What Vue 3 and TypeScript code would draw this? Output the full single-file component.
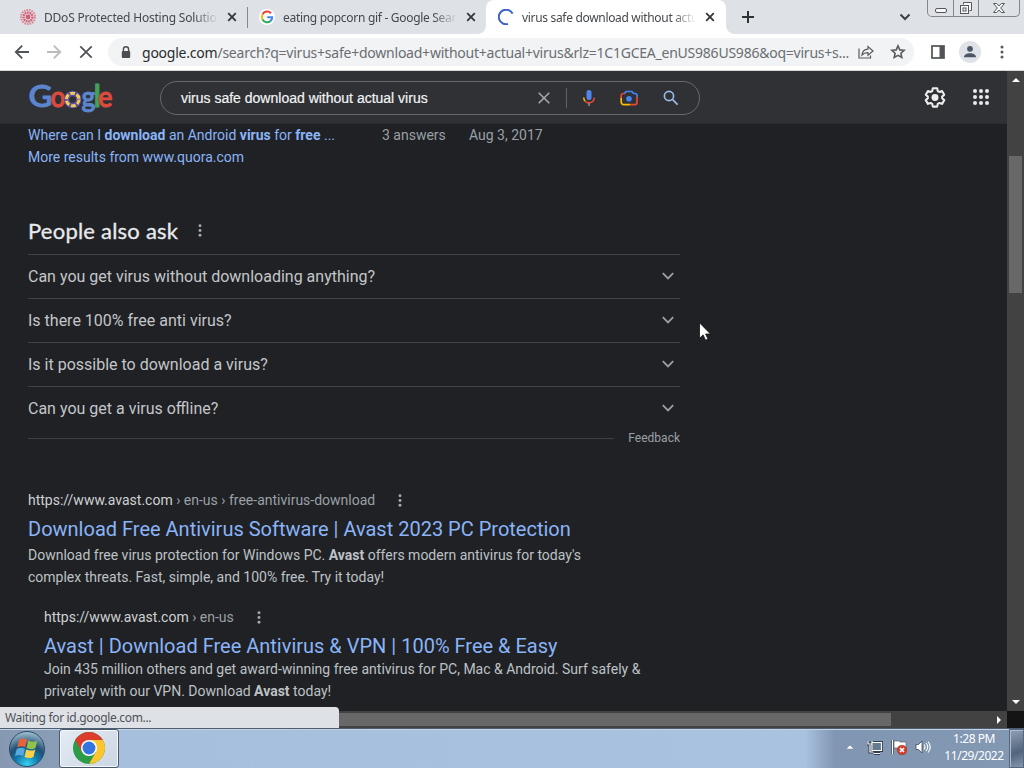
<template>
  <div class="desktop">
    <header class="tab-strip">
      <div v-for="tab in tabs" :key="tab.title" :class="['tab', tab.icon, { active: tab.active }]">
        <svg v-if="tab.icon === 'flower'" class="tab-icon" viewBox="0 0 16 16">
          <circle cx="8" cy="8" r="7" fill="none" stroke="#dc8291" stroke-width="2" stroke-dasharray="1.6 1" />
          <circle cx="8" cy="8" r="4.4" fill="none" stroke="#d2667a" stroke-width="2.4" stroke-dasharray="1.8 .6" />
          <circle cx="8" cy="8" r="2.4" fill="#cf5c71" />
        </svg>
        <svg v-else-if="tab.icon === 'google'" class="tab-icon" viewBox="0 0 16 16">
          <circle cx="8" cy="8" r="8" fill="#fff" />
          <g fill="none" stroke-width="2.1">
            <path d="M12 4.2A5.2 5.2 0 0 0 3.5 5.4" stroke="#ea4335" />
            <path d="M3.5 5.4a5.3 5.3 0 0 0 0 5.2" stroke="#fbbc05" />
            <path d="M3.5 10.6a5.2 5.2 0 0 0 7.9 1.5" stroke="#34a853" />
            <path d="M11.4 12.1A5 5 0 0 0 13.1 8.2H8.2" stroke="#4285f4" />
          </g>
        </svg>
        <svg v-else class="tab-icon" viewBox="0 0 16 16">
          <path d="M14.6 4.6A7.3 7.3 0 1 0 10 15" fill="none" stroke="#3c62c4" stroke-width="2" />
        </svg>
        <span class="tab-title">{{ tab.title }}</span>
        <svg class="tab-close" viewBox="0 0 10 10"><path d="M1.2 1.2l7.6 7.6M8.8 1.2L1.2 8.8" /></svg>
      </div>
      <svg class="new-tab" viewBox="0 0 12 12"><path d="M6 0v12M0 6h12" /></svg>
      <svg class="tab-search" viewBox="0 0 12 8"><path d="M1.5 1.5L6 6l4.5-4.5" /></svg>
      <div class="window-buttons">
        <span class="minimize"><svg viewBox="0 0 14 14"><rect x="1.5" y="7.5" width="11" height="4" rx="1.5" /></svg></span>
        <span class="restore">
          <svg viewBox="0 0 14 14">
            <path d="M4.5 3.5v-2h8v8h-2" /><rect x="1.5" y="4.5" width="8" height="8" /><rect x="4" y="7" width="3" height="3" />
          </svg>
        </span>
        <span class="shut">
          <svg viewBox="0 0 14 14">
            <path d="M1.5 2.5h3.2L7 5l2.3-2.5h3.2L8.7 7l3.8 4.5H9.3L7 9l-2.3 2.5H1.5L5.3 7z" />
          </svg>
        </span>
      </div>
    </header>

    <nav class="toolbar">
      <svg class="nav-icon" viewBox="0 0 16 16"><path d="M15 8H2M8.2 1.6L1.8 8l6.4 6.4" /></svg>
      <svg class="nav-icon disabled" viewBox="0 0 16 16"><path d="M1 8h13M7.8 1.6L14.2 8l-6.4 6.4" /></svg>
      <svg class="nav-icon" viewBox="0 0 16 16"><path d="M2.3 2.3l11.4 11.4M13.7 2.3L2.3 13.7" /></svg>
      <div class="omnibox">
        <svg class="lock" viewBox="0 0 10 13">
          <path d="M2.4 6V3.4a2.6 2.6 0 0 1 5.2 0V6" fill="none" stroke="#4a4d51" stroke-width="1.4" />
          <rect x=".8" y="5" width="8.4" height="7" rx="1" fill="#4a4d51" />
        </svg>
        <span class="url"><b>google.com</b>/search?q=virus+safe+download+without+actual+virus&amp;rlz=1C1GCEA_enUS986US986&amp;oq=virus+s...</span>
        <svg class="share" viewBox="0 0 16 16">
          <path d="M1 4.5V14h11.5v-2.5M4 11c.3-4 2.5-5.7 6-5.9V2.5L15 7l-5 4.2V8.7C7 8.6 5.5 9.2 4 11z" />
        </svg>
        <svg class="star" viewBox="0 0 16 16">
          <path d="M8 1.9l1.8 4 4.3.4-3.2 2.9.9 4.300L8 11.300l-3.800 2.200.9-4.300-3.200-2.900 4.300-.4z" />
        </svg>
      </div>
      <svg class="side-panel" viewBox="0 0 14 14">
        <rect x="1" y="1" width="12" height="12" fill="none" stroke="#515457" stroke-width="1.7" /><path d="M8.5 1H13v12H8.5z" fill="#515457" />
      </svg>
      <svg class="avatar" viewBox="0 0 22 22">
        <circle cx="11" cy="11" r="11" fill="#dfe2e7" />
        <circle cx="11" cy="7.8" r="2.900" fill="#4d5666" />
        <path d="M5 16.2c0-5.4 12-5.4 12 0z" fill="#4d5666" />
      </svg>
      <svg class="menu" viewBox="0 0 4 14"><circle v-for="y in [2, 7, 12]" :key="y" cx="2" :cy="y" r="1.5" fill="#55585c" /></svg>
    </nav>

    <main class="viewport">
      <div class="page">
        <div class="search-header">
          <svg class="logo" viewBox="0 0 86 34">
            <g class="logo-text">
              <text x="0.5" y="25" class="blue capital" textLength="24" lengthAdjust="spacingAndGlyphs">G</text>
              <text x="22.500" y="25" class="red" textLength="15" lengthAdjust="spacingAndGlyphs">o</text>
              <text x="53.500" y="25" class="blue" textLength="14" lengthAdjust="spacingAndGlyphs">g</text>
              <text x="65.500" y="25" class="green tall">l</text>
              <text x="70" y="25" class="red" textLength="14.500" lengthAdjust="spacingAndGlyphs">e</text>
            </g>
            <circle cx="44.7" cy="17.500" r="6" fill="none" stroke="#5b4fa0" stroke-width="5.500" />
            <circle cx="44.7" cy="17.500" r="6.300" fill="none" stroke="#f1cc52" stroke-width="3" stroke-dasharray="4.800 1.800" />
          </svg>
          <div class="search-box">
            <span class="query">virus safe download without actual virus</span>
            <svg class="clear" viewBox="0 0 12 12"><path d="M.7.7l10.6 10.6M11.3.7L.7 11.3" /></svg>
            <i class="divider"></i>
            <svg class="mic" viewBox="0 0 14 18">
              <rect x="4.500" y="1" width="5" height="10" rx="2.500" fill="#4f86ec" />
              <path d="M1.7 8.5a5.4 5.4 0 0 0 1.5 3.7" stroke="#f6b90d" />
              <path d="M3.2 12.2A5.3 5.3 0 0 0 12.3 8.5" stroke="#e5483b" />
              <path d="M7 14v3" stroke="#a08d82" />
            </svg>
            <svg class="lens" viewBox="0 0 18 16">
              <path d="M1.2 8V5.5a2 2 0 0 1 2-2H5" stroke="#e5483b" />
              <path d="M4.5 3.5L6 1.5h6l1.5 2H15a2 2 0 0 1 2 2V7" stroke="#4285f4" />
              <path d="M1.2 8v4a2.6 2.6 0 0 0 2.6 2.6H10" stroke="#fbbc04" />
              <path d="M10 14.6h5a2 2 0 0 0 2-2V7" stroke="#e5483b" />
              <circle cx="9" cy="8.7" r="2.8" fill="#4285f4" />
            </svg>
            <svg class="magnifier" viewBox="0 0 16 16"><circle cx="6" cy="6" r="4.6" /><path d="M9.4 9.4l5.2 5.2" /></svg>
          </div>
          <svg class="gear" viewBox="0 0 24 24">
            <path d="M9.6 2.5h4.8l.6 3 1.8 1 2.900-1 2.400 4.100-2.300 2v1.800l2.300 2-2.400 4.100-2.900-1-1.800 1-.6 3H9.600l-.6-3-1.800-1-2.900 1-2.400-4.100 2.300-2v-1.800l-2.300-2 2.400-4.100 2.900 1 1.800-1z" />
            <circle cx="12" cy="12.500" r="3.800" />
          </svg>
          <svg class="apps" viewBox="0 0 16 16">
            <circle v-for="n in 9" :key="n" :cx="2 + ((n - 1) % 3) * 6" :cy="2 + Math.floor((n - 1) / 3) * 6" r="2" />
          </svg>
        </div>

        <div class="content">
          <div class="forum-row">
            <a>Where can I <b>download</b> an Android <b>virus</b> for <b>free</b> ...</a>
            <span class="answers">3 answers</span>
            <span>Aug 3, 2017</span>
          </div>
          <div class="forum-row"><a>More results from www.quora.com</a></div>

          <h2>
            <span>People also ask</span>
            <svg class="dots" viewBox="0 0 4 14"><circle v-for="y in [2, 7, 12]" :key="y" cx="2" :cy="y" r="1.6" /></svg>
          </h2>
          <div v-for="question in questions" :key="question" class="question">
            <span>{{ question }}</span>
            <svg viewBox="0 0 12 8"><path d="M.8 1.2L6 6.4l5.2-5.2" /></svg>
          </div>
          <div class="feedback"><i></i><span>Feedback</span></div>

          <article v-for="result in results" :key="result.title" :class="['result', { nested: result.nested }]">
            <div class="cite">
              <span>https://www.avast.com</span><em>{{ result.path }}</em>
              <svg class="dots" viewBox="0 0 4 14"><circle v-for="y in [2, 7, 12]" :key="y" cx="2" :cy="y" r="1.6" /></svg>
            </div>
            <h3>{{ result.title }}</h3>
            <p v-for="(line, i) in result.lines" :key="i">
              <template v-for="(part, j) in line" :key="j"><b v-if="part === 'Avast'">{{ part }}</b><template v-else>{{ part }}</template></template>
            </p>
          </article>
        </div>
      </div>
      <div class="v-scroll">
        <svg viewBox="0 0 8 4"><path d="M0 4l4-4 4 4z" /></svg>
        <div class="v-thumb"></div>
        <svg viewBox="0 0 8 4"><path d="M0 0l4 4 4-4z" /></svg>
      </div>
    </main>
    <div class="h-scroll">
      <div class="h-track">
        <div class="h-thumb"></div>
        <svg viewBox="0 0 4 8"><path d="M0 0l4 4-4 4z" /></svg>
      </div>
      <div class="status">Waiting for id.google.com...</div>
    </div>

    <footer class="taskbar">
      <svg class="start" viewBox="0 0 38 38">
        <defs>
          <radialGradient id="orb" cx=".5" cy=".95" r=".95">
            <stop offset="0" stop-color="#39d4f4" /><stop offset=".35" stop-color="#127bae" />
            <stop offset=".6" stop-color="#214f73" /><stop offset="1" stop-color="#a5c3d4" />
          </radialGradient>
        </defs>
        <circle cx="19" cy="19" r="17.5" fill="url(#orb)" stroke="#294a66" />
        <path d="M11 10c3-2 6-1.800 8-.2L17.200 17.300c-3-1.500-5.500-1.300-8 .2z" fill="#e8633a" />
        <path d="M20.200 10.500c3 1.600 6 1.600 9 .2L27.500 18c-3 1.700-6 1.500-9 .1z" fill="#91c34a" />
        <path d="M8.700 19c3-1.700 5.600-1.500 8.200-.3L15.200 26c-2.800-1.400-5.600-1.300-8.200.2z" fill="#55a9dd" />
        <path d="M18.200 19.500c3.300 1.500 6.200 1.400 9-.1L25.500 26.900c-3 1.600-6 1.600-9 .1z" fill="#fad047" />
      </svg>
      <div class="task-button">
        <svg viewBox="0 0 48 48">
          <circle cx="24" cy="24" r="24" fill="#2d9b48" />
          <path d="M3.220 12A24 24 0 0 1 44.780 12H24L13.600 30z" fill="#dc3c2c" />
          <path d="M44.780 12A24 24 0 0 1 24 48L34.400 30 24 12z" fill="#fcc62c" />
          <circle cx="24" cy="24" r="12" fill="#fff" />
          <circle cx="24" cy="24" r="9.700" fill="#3474e0" />
        </svg>
      </div>
      <div class="tray">
        <svg class="tray-arrow" viewBox="0 0 8 5"><path d="M0 5l4-4 4 4z" fill="#fff" stroke="#68788c" stroke-width=".5" /></svg>
        <svg class="network" viewBox="0 0 16 16">
          <g fill="none" stroke="#2f3c4b" stroke-width="3"><path d="M5 3.5h9.500v8H5zM7 14.500h6M3 6v7h3M1 2v3h4V2" /></g>
          <path d="M6 4h8v7H6z" fill="#667b92" />
          <g fill="none" stroke="#fff" stroke-width="1.2"><path d="M5 3.500h9.500v8H5zM7 14.500h6M3 6v7h3M1 2v3h4V2" /></g>
        </svg>
        <svg class="flag" viewBox="0 0 16 16">
          <path d="M1.5 1v14" stroke="#3b4654" stroke-width="3" /><path d="M1.5 1v14" stroke="#fff" stroke-width="1.3" />
          <path d="M3 2h5l1 1h6v7H9L8 9H3z" fill="#fff" stroke="#566474" stroke-width=".7" />
          <circle cx="11" cy="11" r="4.8" fill="#d63d2d" stroke="#8f261d" stroke-width=".5" />
          <path d="M9 9l4 4M13 9l-4 4" stroke="#fff" stroke-width="1.7" />
        </svg>
        <svg class="speaker" viewBox="0 0 16 16">
          <path d="M1 5.5h2.500L7 2v12l-3.500-3.500H1z" fill="#fff" stroke="#3c4a5a" stroke-width=".8" />
          <path d="M9 5.500q2 2.500 0 5M11 4q3.500 4 0 8M13 2.500q4.500 5.500 0 11" fill="none" stroke="#fff" stroke-width="1.1" />
        </svg>
      </div>
      <div class="clock"><span>1:28 PM</span><span>11/29/2022</span></div>
      <div class="show-desktop"></div>
    </footer>

    <svg class="cursor" viewBox="0 0 12 19">
      <path d="M.5.8v15.5l3.600-3.400 2.400 5.300 2.500-1.100-2.400-5.100h4.900z" fill="#fff" stroke="#111" stroke-width=".8" />
    </svg>
  </div>
</template>

<script setup lang="ts">
interface Tab {
  title: string
  icon: string
  active?: boolean
}

interface Result {
  path: string
  title: string
  lines: string[][]
  nested?: boolean
}

const tabs: Tab[] = [
  { title: 'DDoS Protected Hosting Solutions', icon: 'flower' },
  { title: 'eating popcorn gif - Google Search', icon: 'google' },
  { title: 'virus safe download without actual', icon: 'loading', active: true }
]

const questions: string[] = [
  'Can you get virus without downloading anything?',
  'Is there 100% free anti virus?',
  'Is it possible to download a virus?',
  'Can you get a virus offline?'
]

const results: Result[] = [
  {
    path: ' › en-us › free-antivirus-download',
    title: 'Download Free Antivirus Software | Avast 2023 PC Protection',
    lines: [
      ['Download free virus protection for Windows PC. ', 'Avast', " offers modern antivirus for today's"],
      ['complex threats. Fast, simple, and 100% free. Try it today!']
    ]
  },
  {
    path: ' › en-us',
    title: 'Avast | Download Free Antivirus & VPN | 100% Free & Easy',
    lines: [
      ['Join 435 million others and get award-winning free antivirus for PC, Mac & Android. Surf safely &'],
      ['privately with our VPN. Download ', 'Avast', ' today!']
    ],
    nested: true
  }
]
</script>

<style>
body {
  margin: 0;
  overflow: hidden;
}
</style>

<style scoped>
.desktop {
  position: relative;
  display: flex;
  flex-direction: column;
  width: 1024px;
  height: 768px;
  overflow: hidden;
  background: #202124;
  font-family: Roboto, sans-serif;
}

.desktop * {
  box-sizing: border-box;
}

svg {
  display: block;
  flex: none;
}

/* tabs */
.tab-strip {
  display: flex;
  align-items: center;
  height: 34px;
  flex: none;
  background: #dee1e6;
  font: 12px "Noto Sans", sans-serif;
  color: #45484c;
}

.tab {
  display: flex;
  align-items: center;
  height: 34px;
  width: 240px;
}

.tab.flower {
  width: 248px;
  padding-left: 20px;
  border-right: 1px solid transparent;
  border-image: linear-gradient(transparent 8px, #85898e 8px, #85898e 27px, transparent 27px) 1;
}

.tab.google {
  width: 238px;
  padding-left: 11px;
}

.tab.active {
  position: relative;
  padding-left: 12px;
  background: #fff;
  border-radius: 8px 8px 0 0;
}

.tab.active::before,
.tab.active::after {
  content: '';
  position: absolute;
  bottom: 0;
  width: 8px;
  height: 8px;
}

.tab.active::before {
  left: -8px;
  background: radial-gradient(circle at 0 0, transparent 7.5px, #fff 8px);
}

.tab.active::after {
  right: -8px;
  background: radial-gradient(circle at 100% 0, transparent 7.5px, #fff 8px);
}

.tab-icon {
  width: 16px;
  height: 16px;
  margin-right: 8px;
}

.tab-title {
  width: 174px;
  overflow: hidden;
  white-space: nowrap;
  -webkit-mask-image: linear-gradient(90deg, #000 150px, transparent 174px);
}

.flower .tab-title {
  letter-spacing: -0.2px;
}

.google .tab-title {
  letter-spacing: -0.3px;
}

.active .tab-title {
  letter-spacing: -0.32px;
}

.tab-close {
  width: 10px;
  height: 10px;
  margin-left: 9px;
  stroke: #34373a;
  stroke-width: 1.8;
}

.new-tab {
  width: 12px;
  height: 12px;
  margin-left: 16px;
  stroke: #2f3134;
  stroke-width: 2;
}

.tab-search {
  width: 12px;
  height: 8px;
  margin-left: 145px;
  fill: none;
  stroke: #3c4043;
  stroke-width: 2;
}

.window-buttons {
  display: flex;
  align-self: flex-start;
  width: 93px;
  height: 17px;
  margin-left: 16px;
  border: 1px solid #84888e;
  border-top: 0;
  border-radius: 0 0 5px 5px;
}

.window-buttons span {
  display: flex;
  align-items: center;
  justify-content: center;
  width: 25px;
}

.window-buttons .shut {
  width: 41px;
}

.window-buttons span + span {
  border-left: 1px solid #84888e;
}

.window-buttons svg {
  width: 14px;
  height: 14px;
  fill: #f7f7f8;
  stroke: #54585d;
}

/* toolbar */
.toolbar {
  display: flex;
  align-items: center;
  height: 37px;
  flex: none;
  padding-left: 14px;
  background: #fff;
  border-bottom: 1px solid #d5d8d6;
}

.nav-icon {
  width: 16px;
  height: 16px;
  margin-right: 16px;
  fill: none;
  stroke: #505357;
  stroke-width: 1.8;
}

.nav-icon.disabled {
  stroke: #b9bbbe;
}

.omnibox {
  display: flex;
  align-items: center;
  width: 806px;
  height: 28px;
  margin-left: -2px;
  padding-left: 13px;
  border-radius: 14px;
  background: #f1f3f4;
}

.lock {
  width: 10px;
  height: 13px;
}

.url {
  width: 716px;
  margin-left: 11px;
  font: 14px "Noto Sans", sans-serif;
  letter-spacing: -0.23px;
  color: #6a6e73;
  white-space: nowrap;
}

.url b {
  font-weight: 400;
  color: #2a2c2f;
}

.share,
.star {
  width: 16px;
  height: 16px;
  fill: none;
  stroke: #585b5f;
  stroke-width: 1.2;
}

.star {
  margin-left: 16px;
  stroke-width: 1.6;
}

.side-panel {
  width: 14px;
  height: 14px;
  margin-left: 17px;
}

.avatar {
  width: 22px;
  height: 22px;
  margin-left: 14px;
}

.menu {
  width: 4px;
  height: 14px;
  margin-left: 19px;
}

/* web page */
.viewport {
  display: flex;
  height: 640px;
}

.page {
  width: 1007px;
  overflow: hidden;
}

.search-header {
  display: flex;
  align-items: center;
  height: 53px;
  padding: 0 18px 0 28px;
  background: #303134;
  border-bottom: 1px solid #2b2c2f;
}

.logo {
  width: 86px;
  height: 34px;
  margin-top: 4px;
  overflow: visible;
}

.logo-text {
  font: 600 28px Lato, sans-serif;
  stroke-width: 0.9;
}

.logo-text .capital {
  font-size: 31px;
}

.logo-text .tall {
  font-size: 31px;
}

.blue {
  fill: #5b86cf;
  stroke: #5b86cf;
}

.red {
  fill: #dc4a3e;
  stroke: #dc4a3e;
}

.green {
  fill: #43a05a;
  stroke: #43a05a;
}

.search-box {
  display: flex;
  align-items: center;
  width: 540px;
  height: 34px;
  margin: 1px 0 0 46px;
  padding-left: 20px;
  border: 1px solid #66696e;
  border-radius: 17px;
}

.query {
  width: 357px;
  font: 14px "Liberation Sans", sans-serif;
  color: #f1f3f4;
  -webkit-text-stroke: 0.2px #f1f3f4;
}

.clear {
  width: 12px;
  height: 12px;
  stroke: #a4a8ad;
  stroke-width: 1.6;
}

.divider {
  width: 1px;
  height: 20px;
  margin-left: 16px;
  background: #5f6368;
}

.mic {
  width: 14px;
  height: 18px;
  margin-left: 15px;
  fill: none;
  stroke-width: 1.5;
}

.lens {
  width: 18px;
  height: 16px;
  margin-left: 24px;
  fill: none;
  stroke-width: 1.7;
}

.magnifier {
  width: 16px;
  height: 16px;
  margin-left: 25px;
  fill: none;
  stroke: #9ab7e8;
  stroke-width: 1.7;
}

.gear {
  width: 22px;
  height: 22px;
  margin-left: auto;
  fill: none;
  stroke: #eee;
  stroke-width: 2.2;
  stroke-linejoin: round;
}

.gear circle {
  fill: #eee;
  stroke: none;
}

.apps {
  width: 16px;
  height: 16px;
  margin-left: 27px;
  fill: #e8eaed;
}

.content {
  padding: 0 28px;
}

.forum-row {
  display: flex;
  height: 22px;
  font-size: 14px;
  line-height: 22px;
  color: #9aa0a6;
}

.forum-row a {
  width: 354px;
  color: #8ab4f8;
}

.forum-row b {
  font-weight: 700;
}

.answers {
  width: 87px;
}

h2 {
  display: flex;
  align-items: center;
  height: 34px;
  margin: 45px 0 7px;
  font: 400 22px Lato, sans-serif;
  letter-spacing: 0.22px;
  color: #e8eaed;
  -webkit-text-stroke: 0.3px #e8eaed;
}

.dots {
  width: 4px;
  height: 13px;
  margin-left: 20px;
  fill: #a4a8ad;
}

.cite .dots {
  margin-left: 23px;
}

.question {
  display: flex;
  align-items: center;
  justify-content: space-between;
  width: 652px;
  height: 44px;
  padding-right: 6px;
  border-top: 1px solid #414346;
  font-size: 16px;
  color: #c3c6ca;
}

.question svg {
  width: 12px;
  height: 8px;
  margin-bottom: 2px;
  fill: none;
  stroke: #9aa0a6;
  stroke-width: 1.8;
}

.feedback {
  display: flex;
  align-items: center;
  justify-content: space-between;
  width: 652px;
  height: 16px;
  font-size: 12px;
  color: #9aa0a6;
}

.feedback i {
  width: 586px;
  height: 1px;
  background: #3c4043;
}

.result {
  padding-top: 43px;
  font-size: 14px;
  color: #bdc1c6;
}

.result.nested {
  padding: 18px 0 0 16px;
}

.cite {
  display: flex;
  align-items: center;
  height: 22px;
  white-space: pre;
  color: #ced1d4;
}

.cite em {
  font-style: normal;
  color: #9aa0a6;
}

h3 {
  height: 33px;
  margin: 0;
  font-size: 20px;
  font-weight: 400;
  line-height: 36px;
  color: #8ab4f8;
}

.nested h3 {
  height: 30px;
}

p {
  height: 22px;
  margin: 0;
  line-height: 22px;
  white-space: nowrap;
}

/* scrollbars */
.v-scroll {
  display: flex;
  flex-direction: column;
  align-items: center;
  width: 17px;
  padding: 7px 0;
  background: #424242;
}

.v-scroll svg {
  width: 8px;
  height: 4px;
  fill: #fff;
}

.v-thumb {
  width: 13px;
  height: 137px;
  margin: 74px 0 auto;
  background: #686868;
}

.h-scroll {
  position: relative;
  height: 17px;
  background: #141414;
}

.h-track {
  display: flex;
  align-items: center;
  width: 1007px;
  height: 17px;
  background: #424242;
}

.h-thumb {
  width: 874px;
  height: 13px;
  margin-left: 17px;
  background: #686868;
}

.h-track svg {
  width: 4px;
  height: 8px;
  margin-left: 106px;
  fill: #fff;
}

.status {
  position: absolute;
  left: 0;
  bottom: 0;
  width: 339px;
  height: 21px;
  padding-left: 5px;
  border-radius: 0 4px 0 0;
  background: #dee1e6;
  font: 12px/21px "Noto Sans", sans-serif;
  letter-spacing: -0.33px;
  color: #505357;
}

/* taskbar */
.taskbar {
  display: flex;
  align-items: center;
  height: 40px;
  border-top: 1px solid #4e5d70;
  box-shadow: inset 0 1px #c4d3e3;
  background: linear-gradient(90deg, #8799b2 0, #899db7 58px, #a5bfdc 120px, #a8c2df 805px, #8096b2 835px, #8398b2 100%);
}

.start {
  width: 38px;
  height: 38px;
  margin-left: 8px;
}

.task-button {
  display: flex;
  align-items: center;
  justify-content: center;
  width: 60px;
  height: 39px;
  margin-left: 13px;
  border: 1px solid #49596c;
  border-radius: 3px;
  box-shadow: inset 0 0 0 1px #f4f7fb;
  background: linear-gradient(135deg, #e3ebf4, #cbd6e3);
}

.task-button svg {
  width: 32px;
  height: 32px;
  margin-bottom: 2px;
}

.tray {
  display: flex;
  align-items: center;
  height: 34px;
  margin: 0 0 4px auto;
}

.tray-arrow {
  width: 8px;
  height: 5px;
  margin-right: 13px;
}

.network,
.flag,
.speaker {
  width: 16px;
  height: 16px;
  margin-right: 8px;
}

.clock {
  display: flex;
  flex-direction: column;
  align-items: center;
  width: 70px;
  margin-bottom: 3px;
  font: 12px/17px "Noto Sans", sans-serif;
  letter-spacing: -0.45px;
  color: #fff;
}

.show-desktop {
  width: 15px;
  height: 39px;
  border: 1px solid #56677d;
  box-shadow: inset 1px 1px #aebdce;
  background: linear-gradient(160deg, #92a2b5, #52647b 60%, #8397ae);
}

.cursor {
  position: absolute;
  left: 699px;
  top: 322px;
  width: 12px;
  height: 19px;
}
</style>
